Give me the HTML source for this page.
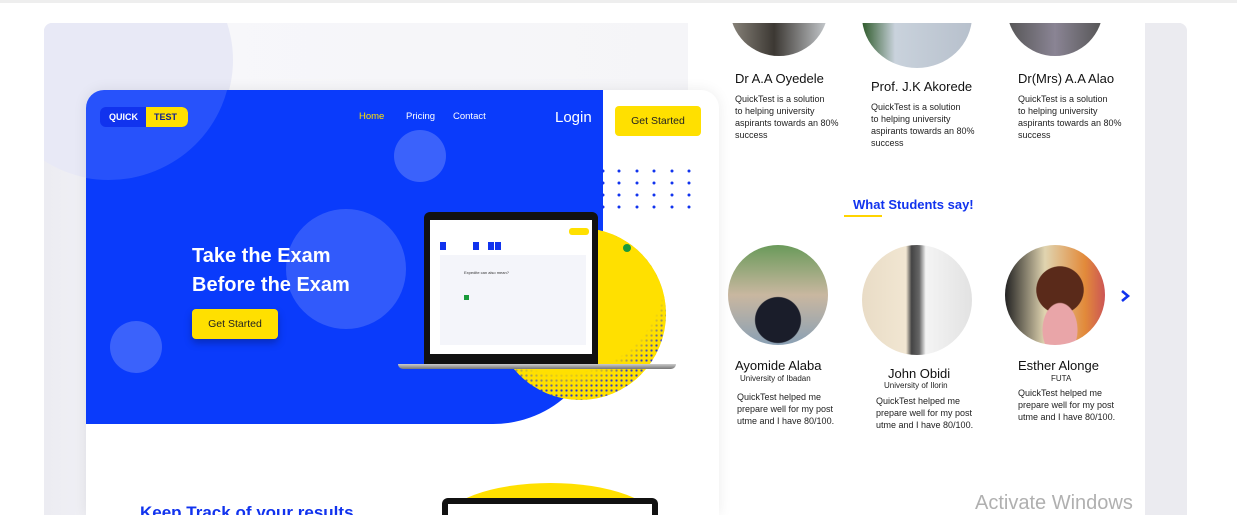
<!DOCTYPE html>
<html><head><meta charset="utf-8"><style>
*{margin:0;padding:0;box-sizing:border-box}
body{width:1249px;height:515px;overflow:hidden;background:#fff;font-family:"Liberation Sans",sans-serif;position:relative}
.a{position:absolute}
.txt{color:#222;font-size:9px;line-height:12px}
.nm{font-size:13px;color:#111}
.circ{border-radius:50%;overflow:hidden}
</style></head><body>
<div class="a" style="left:0;top:0;width:1237px;height:3px;background:#eee"></div>
<div class="a" style="left:44px;top:23px;width:1143px;height:492px;background:#f1f1f5;border-radius:8px 8px 0 0;overflow:hidden">
 <div class="a" style="left:0;top:0;width:660px;height:492px;background:linear-gradient(90deg,#ececf2,#f7f7fa 20%,#f5f5f8)"></div>
 <div class="a circ" style="left:-56px;top:-83px;width:245px;height:240px;background:#e8e9f6"></div>
 <div class="a" style="left:644px;top:0;width:457px;height:492px;background:#fff"></div>
 <div class="a" style="left:1101px;top:0;width:42px;height:492px;background:#ebebf0"></div>
 <div class="a circ" style="left:686px;top:-63px;width:98px;height:96px;background:linear-gradient(90deg,#8a857c,#3c3833 45%,#c8ccd0)"></div>
 <div class="a circ" style="left:818px;top:-59px;width:110px;height:104px;background:linear-gradient(90deg,#2e5a2a,#c9d2dc 30%,#b7c0cc)"></div>
 <div class="a circ" style="left:963px;top:-63px;width:96px;height:96px;background:linear-gradient(90deg,#555,#8a8494 50%,#555)"></div>
</div>

<!-- card -->
<div class="a" style="left:86px;top:90px;width:633px;height:425px;background:#fff;border-radius:18px 18px 0 0;overflow:hidden;box-shadow:0 0 14px rgba(0,0,0,.08)">
 <div class="a" style="left:0;top:0;width:517px;height:334px;background:#0a3bfb;border-radius:0 0 110px 0"></div>
 <div class="a" style="left:0;top:0;width:240px;height:90px;overflow:hidden"><div class="a circ" style="left:-100px;top:-150px;width:245px;height:240px;background:rgba(255,255,255,.12)"></div></div>
 <div class="a circ" style="left:308px;top:40px;width:52px;height:52px;background:rgba(255,255,255,.2)"></div>
 <div class="a circ" style="left:200px;top:119px;width:120px;height:120px;background:rgba(255,255,255,.16)"></div>
 <div class="a circ" style="left:24px;top:231px;width:52px;height:52px;background:rgba(255,255,255,.2)"></div>
 <div class="a circ" style="left:408px;top:138px;width:172px;height:172px;background:#ffe000;background-image:radial-gradient(#2b3ac9 1px,transparent 1.3px);background-size:5px 5px;"></div>
 <div class="a circ" style="left:408px;top:138px;width:172px;height:172px;background:radial-gradient(circle at 40% 25%,#ffe000 62%,transparent 72%)"></div>
 <div class="a" style="left:14px;top:17px;width:88px;height:20px;background:#1133ee;border-radius:6px;overflow:hidden;font:bold 9px 'Liberation Sans';color:#fff">
  <span class="a" style="left:9px;top:5px">QUICK</span>
  <div class="a" style="left:46px;top:0;width:42px;height:20px;background:#ffe000;color:#102090;border-radius:0 6px 6px 0"><span class="a" style="left:8px;top:5px">TEST</span></div>
 </div>
 <span class="a" style="left:273px;top:21px;font-size:9.5px;color:#ffe000">Home</span>
 <span class="a" style="left:320px;top:21px;font-size:9.5px;color:#fff">Pricing</span>
 <span class="a" style="left:367px;top:21px;font-size:9.5px;color:#fff">Contact</span>
 <span class="a" style="left:469px;top:19px;font-size:15px;color:#fff">Login</span>
 <div class="a" style="left:529px;top:16px;width:86px;height:30px;background:#ffe000;border-radius:4px;font-size:10.5px;color:#222;text-align:center;line-height:30px">Get Started</div>
 <svg class="a" style="left:515px;top:78px" width="100" height="46"><g fill="#1133ee">
  <circle cx="2" cy="3" r="1.5"/><circle cx="2" cy="15" r="1.5"/><circle cx="2" cy="27" r="1.5"/><circle cx="2" cy="39" r="1.5"/>
  <circle cx="18" cy="3" r="1.5"/><circle cx="18" cy="15" r="1.5"/><circle cx="18" cy="27" r="1.5"/><circle cx="18" cy="39" r="1.5"/>
  <circle cx="36" cy="3" r="1.5"/><circle cx="36" cy="15" r="1.5"/><circle cx="36" cy="27" r="1.5"/><circle cx="36" cy="39" r="1.5"/>
  <circle cx="53" cy="3" r="1.5"/><circle cx="53" cy="15" r="1.5"/><circle cx="53" cy="27" r="1.5"/><circle cx="53" cy="39" r="1.5"/>
  <circle cx="71" cy="3" r="1.5"/><circle cx="71" cy="15" r="1.5"/><circle cx="71" cy="27" r="1.5"/><circle cx="71" cy="39" r="1.5"/>
  <circle cx="88" cy="3" r="1.5"/><circle cx="88" cy="15" r="1.5"/><circle cx="88" cy="27" r="1.5"/><circle cx="88" cy="39" r="1.5"/></g></svg>
 <div class="a" style="left:106px;top:152px;font:bold 20px/29px 'Liberation Sans';color:#fff">Take the Exam<br>Before the Exam</div>
 <div class="a" style="left:106px;top:219px;width:86px;height:30px;background:#ffe000;border-radius:4px;font-size:10.5px;color:#222;text-align:center;line-height:30px;box-shadow:0 4px 8px rgba(0,0,0,.25)">Get Started</div>
 <div class="a" style="left:338px;top:122px;width:174px;height:152px;background:#111;border-radius:6px 6px 0 0"></div>
 <div class="a" style="left:344px;top:130px;width:162px;height:134px;background:#fff"></div>
 <div class="a" style="left:354px;top:165px;width:146px;height:90px;background:#f4f5fa"></div>
 <div class="a" style="left:354px;top:152px;width:6px;height:8px;background:#1133ee"></div>
 <div class="a" style="left:387px;top:152px;width:6px;height:8px;background:#1133ee"></div>
 <div class="a" style="left:402px;top:152px;width:6px;height:8px;background:#1133ee"></div>
 <div class="a" style="left:409px;top:152px;width:6px;height:8px;background:#1133ee"></div>
 <div class="a" style="left:483px;top:138px;width:20px;height:7px;background:#ffe000;border-radius:3px"></div>
 <div class="a circ" style="left:537px;top:154px;width:8px;height:8px;background:#1a9a3a"></div>
 <div class="a" style="left:378px;top:180px;font-size:4px;color:#333">Expedite can also mean?</div>
 <div class="a" style="left:378px;top:205px;width:5px;height:5px;background:#1a9a3a"></div>
 <div class="a" style="left:312px;top:274px;width:278px;height:5px;background:linear-gradient(#ccc,#777);border-radius:0 0 8px 8px"></div>
 <div class="a" style="left:357px;top:393px;width:215px;height:80px;background:#ffe000;border-radius:50%"></div>
 <div class="a" style="left:356px;top:408px;width:216px;height:40px;background:#111;border-radius:6px 6px 0 0"></div>
 <div class="a" style="left:362px;top:414px;width:204px;height:30px;background:#fff"></div>
 <div class="a" style="left:54px;top:413px;font:bold 17px 'Liberation Sans';color:#1133ee">Keep Track of your results</div>
</div>

<div class="a nm" style="left:735px;top:71px">Dr A.A Oyedele</div>
<div class="a nm" style="left:871px;top:79px">Prof. J.K Akorede</div>
<div class="a nm" style="left:1018px;top:71px">Dr(Mrs) A.A Alao</div>
<div class="a txt" style="left:735px;top:93px">QuickTest is a solution<br>to helping university<br>aspirants towards an 80%<br>success</div>
<div class="a txt" style="left:871px;top:101px">QuickTest is a solution<br>to helping university<br>aspirants towards an 80%<br>success</div>
<div class="a txt" style="left:1018px;top:93px">QuickTest is a solution<br>to helping university<br>aspirants towards an 80%<br>success</div>
<div class="a" style="left:853px;top:197px;font:bold 13px 'Liberation Sans';color:#1133ee">What Students say!</div>
<div class="a" style="left:844px;top:215px;width:38px;height:2px;background:#ffd400"></div>
<div class="a circ" style="left:728px;top:245px;width:100px;height:100px;background:radial-gradient(circle at 50% 75%,#1a1d2a 25%,transparent 26%),linear-gradient(#6a9a5a,#c9b7a0 50%,#8aa0b4)"></div>
<div class="a circ" style="left:862px;top:245px;width:110px;height:110px;background:linear-gradient(90deg,#e9dcc6,#f1e6d2 40%,#444 45%,#666 52%,#f4f4f4 58%,#e2e2e2)"></div>
<div class="a circ" style="left:1005px;top:245px;width:100px;height:100px;background:radial-gradient(ellipse at 55% 85%,#e9a5a8 22%,transparent 23%),radial-gradient(circle at 55% 45%,#5a2a1a 30%,transparent 31%),linear-gradient(90deg,#222,#e0d4b0 40%,#e28a3a 80%,#c55)"></div>
<svg class="a" style="left:1119px;top:289px" width="12" height="14"><path d="M3 2 L9 7 L3 12" stroke="#1133ee" stroke-width="2.6" fill="none"/></svg>
<div class="a nm" style="left:735px;top:358px">Ayomide Alaba</div>
<div class="a" style="left:740px;top:374px;font-size:8px;color:#222">University of Ibadan</div>
<div class="a txt" style="left:737px;top:391px">QuickTest helped me<br>prepare well for my post<br>utme and I have 80/100.</div>
<div class="a nm" style="left:888px;top:366px">John Obidi</div>
<div class="a" style="left:884px;top:381px;font-size:8px;color:#222">University of Ilorin</div>
<div class="a txt" style="left:876px;top:395px">QuickTest helped me<br>prepare well for my post<br>utme and I have 80/100.</div>
<div class="a nm" style="left:1018px;top:358px">Esther Alonge</div>
<div class="a" style="left:1051px;top:374px;font-size:8px;color:#222">FUTA</div>
<div class="a txt" style="left:1018px;top:387px">QuickTest helped me<br>prepare well for my post<br>utme and I have 80/100.</div>
<div class="a" style="left:975px;top:492px;font-size:20px;color:#b0b0b0">Activate Windows</div>
</body></html>
